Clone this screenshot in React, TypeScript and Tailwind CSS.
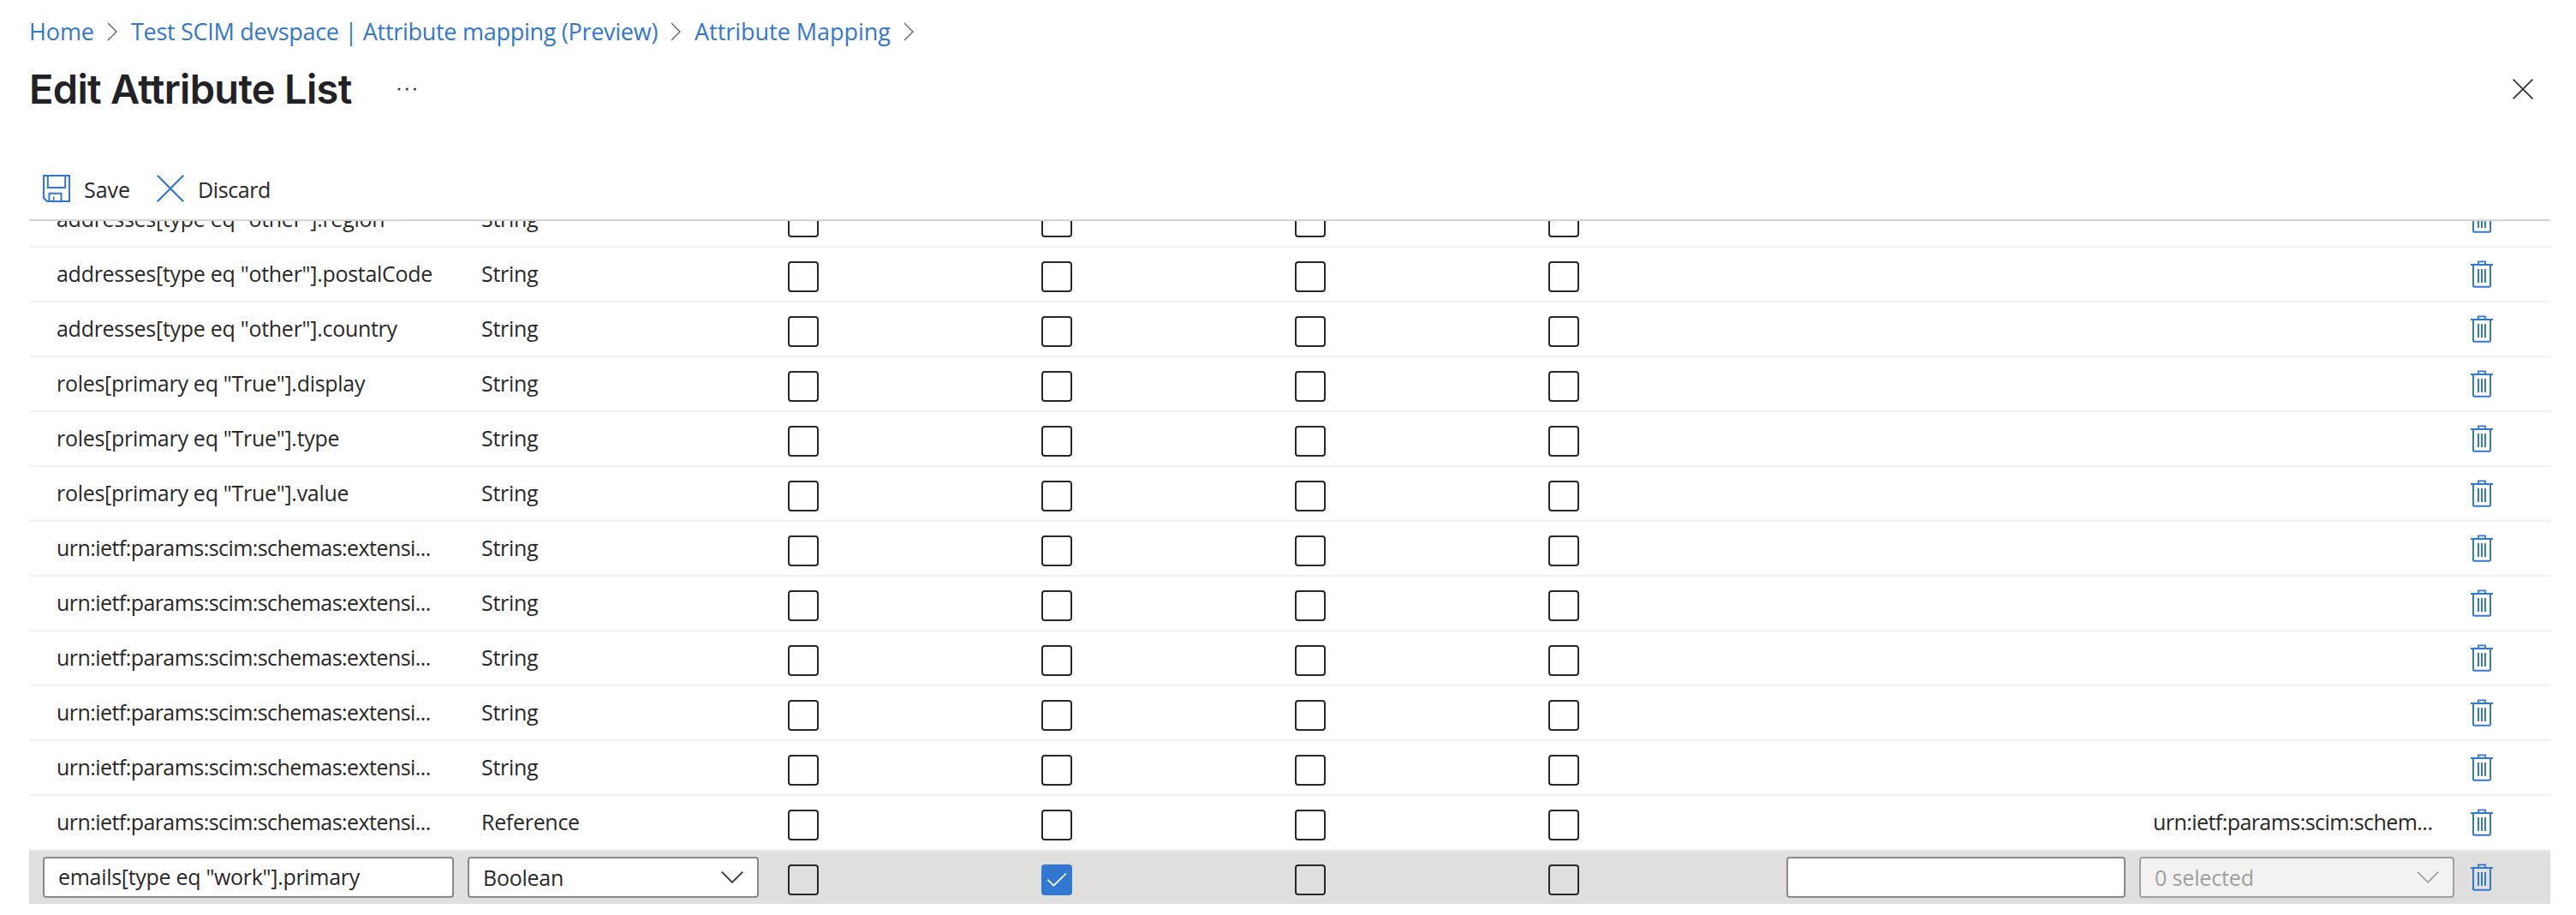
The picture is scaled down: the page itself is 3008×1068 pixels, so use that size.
import React, { useState } from 'react';
import clsx from 'clsx';

interface Attribute {
  id: number;
  name: string;
  type: string;
  reference?: string;
}

const FLAG_COUNT = 4;

const attributes: Attribute[] = [
  { id: 1, name: 'addresses[type eq "other"].region', type: 'String' },
  { id: 2, name: 'addresses[type eq "other"].postalCode', type: 'String' },
  { id: 3, name: 'addresses[type eq "other"].country', type: 'String' },
  { id: 4, name: 'roles[primary eq "True"].display', type: 'String' },
  { id: 5, name: 'roles[primary eq "True"].type', type: 'String' },
  { id: 6, name: 'roles[primary eq "True"].value', type: 'String' },
  { id: 7, name: 'urn:ietf:params:scim:schemas:extensi...', type: 'String' },
  { id: 8, name: 'urn:ietf:params:scim:schemas:extensi...', type: 'String' },
  { id: 9, name: 'urn:ietf:params:scim:schemas:extensi...', type: 'String' },
  { id: 10, name: 'urn:ietf:params:scim:schemas:extensi...', type: 'String' },
  { id: 11, name: 'urn:ietf:params:scim:schemas:extensi...', type: 'String' },
  {
    id: 12,
    name: 'urn:ietf:params:scim:schemas:extensi...',
    type: 'Reference',
    reference: 'urn:ietf:params:scim:schem...'
  }
];

const breadcrumbs = [
  { label: 'Home', className: 'tracking-[-0.1px]' },
  { label: 'Test SCIM devspace | Attribute mapping (Preview)', className: 'tracking-[-0.28px]' },
  { label: 'Attribute Mapping', className: 'tracking-[-0.03px]' }
];

const rowGrid = 'grid grid-cols-[512px_356px_296px_296px_296px_296px_412px_384px_96px]';

const BreadcrumbChevron: React.FC = () => (
  <svg width="12" height="22" viewBox="0 0 12 22" fill="none" stroke="#605e5c" strokeWidth="1.3">
    <path d="M1 1l10 10L1 21" />
  </svg>
);

const SaveIcon: React.FC = () => (
  <svg width="32" height="32" viewBox="0 0 32 32" fill="none" stroke="#3277d2" strokeWidth="2">
    <path d="M1 1h30v30H5l-4-4z" />
    <path d="M5.8 1v14h20.4V1" />
    <path d="M7.5 31v-9.3h14V31" />
    <path d="M12.8 25.5V31" strokeWidth="1.5" />
  </svg>
);

const DiscardIcon: React.FC = () => (
  <svg width="32" height="32" viewBox="0 0 32 32" fill="none" stroke="#3277d2" strokeWidth="2.2">
    <path d="M.8 .8l30.4 30.4M31.2 .8L.8 31.2" />
  </svg>
);

const CloseIcon: React.FC = () => (
  <svg width="24" height="24" viewBox="0 0 24 24" fill="none" stroke="#323130" strokeWidth="1.6">
    <path d="M.6 .6l22.8 22.8M23.4 .6L.6 23.4" />
  </svg>
);

const TrashIcon: React.FC = () => (
  <svg width="26" height="32" viewBox="0 0 26 32" fill="none" stroke="#3277d2" strokeWidth="2">
    <path d="M0 5h26" />
    <path d="M9 5V1.3h8V5" strokeWidth="1.8" />
    <path d="M3 5v24.6q0 1.2 1.2 1.2h17.6q1.2 0 1.2-1.2V5" />
    <path d="M9 10v16M13 10v16M17 10v16" />
  </svg>
);

const DropdownChevron: React.FC<{ color: string }> = ({ color }) => (
  <svg width="26" height="14" viewBox="0 0 26 14" fill="none" stroke={color} strokeWidth="1.8">
    <path d="M.8 .7L13 12.8 25.2 .7" />
  </svg>
);

const Checkbox: React.FC<{ defaultChecked?: boolean }> = ({ defaultChecked = false }) => {
  const [checked, setChecked] = useState(defaultChecked);

  return (
    <div className="pl-[18px] pt-4">
      <button
        role="checkbox"
        aria-checked={checked}
        onClick={() => setChecked(!checked)}
        className={clsx(
          'block h-9 w-9 rounded-[4px] border-2',
          checked ? 'border-[#3277d2] bg-[#3277d2]' : 'border-[#292827]'
        )}
      >
        {checked && (
          <svg width="32" height="32" viewBox="2 2 32 32" fill="none" stroke="#fff" strokeWidth="1.8">
            <path d="M7.3 17.7l7 7L28.8 10.6" />
          </svg>
        )}
      </button>
    </div>
  );
};

const DeleteButton: React.FC = () => (
  <button className="block h-8 pl-[3px] mt-[15px]" aria-label="Delete attribute">
    <TrashIcon />
  </button>
);

const AttributeRow: React.FC<{ attribute: Attribute }> = ({ attribute }) => {
  const isUrn = attribute.name.startsWith('urn:');

  return (
    <div className={clsx(rowGrid, 'h-16 border-b-2 border-[#f3f2f1]')}>
      <div
        className={clsx(
          'flex items-center pl-8 pb-[2px] whitespace-nowrap',
          isUrn ? 'tracking-[-0.56px]' : 'tracking-[-0.28px]'
        )}
      >
        {attribute.name}
      </div>
      <div className="flex items-center pl-4 pb-[2px] tracking-[-0.3px]">{attribute.type}</div>
      {Array.from({ length: FLAG_COUNT }, (_, i) => (
        <Checkbox key={i} />
      ))}
      <div />
      <div className="flex items-center pl-4 pb-[2px] whitespace-nowrap tracking-[-0.56px]">
        {attribute.reference}
      </div>
      <DeleteButton />
    </div>
  );
};

const NewAttributeRow: React.FC = () => {
  const [name, setName] = useState('emails[type eq "work"].primary');
  const [expression, setExpression] = useState('');

  return (
    <div className={clsx(rowGrid, 'h-[62px] bg-[#e0dfdd]')}>
      <div className="pl-4 pt-[7px]">
        <input
          value={name}
          onChange={(e) => setName(e.target.value)}
          className="block h-12 w-[480px] rounded-[4px] border-2 border-[#8a8987] bg-white pl-4 pb-[2px] tracking-[-0.3px] outline-none"
        />
      </div>
      <div className="pt-[7px]">
        <button className="flex h-12 w-[340px] items-center justify-between rounded-[4px] border-2 border-[#8a8987] bg-white px-4">
          <span className="tracking-[-0.25px]">Boolean</span>
          <DropdownChevron color="#323130" />
        </button>
      </div>
      {Array.from({ length: FLAG_COUNT }, (_, i) => (
        <Checkbox key={i} defaultChecked={i === 1} />
      ))}
      <div className="pt-[7px]">
        <input
          value={expression}
          onChange={(e) => setExpression(e.target.value)}
          className="block h-12 w-[396px] rounded-[4px] border-2 border-[#8a8987] bg-white px-4 outline-none"
        />
      </div>
      <div className="pt-[7px]">
        <button
          disabled
          className="flex h-12 w-[368px] items-center justify-between rounded-[4px] border-2 border-[#a19f9d] bg-[#f3f2f0] px-4 text-[#a19f9d]"
        >
          <span className="tracking-[-0.15px]">0 selected</span>
          <DropdownChevron color="#a19f9d" />
        </button>
      </div>
      <DeleteButton />
    </div>
  );
};

const App: React.FC = () => {
  return (
    <div className="h-[1068px] w-[3008px] overflow-hidden bg-white pl-[34px] pr-[30px] font-['Open_Sans',sans-serif] text-[25px] leading-[34px] text-[#292827]">
      {/* Breadcrumb */}
      <nav className="flex h-[73px] items-center text-[27px] text-[#3277d2]">
        {breadcrumbs.map((crumb) => (
          <div key={crumb.label} className="flex items-center">
            <a href="#" className={clsx('whitespace-nowrap', crumb.className)}>
              {crumb.label}
            </a>
            <div className="ml-[15px] mr-4 pt-px">
              <BreadcrumbChevron />
            </div>
          </div>
        ))}
      </nav>

      {/* Title */}
      <header className="flex h-[62px] items-center">
        <h1 className="w-[430px] whitespace-nowrap font-['Inter',sans-serif] text-[47px] font-semibold leading-[60px] tracking-[-0.7px] text-[#212126]">
          Edit Attribute List
        </h1>
        <button aria-label="More actions">
          <svg width="24" height="4" viewBox="0 0 24 4" fill="#323130">
            <circle cx="2" cy="2" r="1.5" />
            <circle cx="11.2" cy="2" r="1.5" />
            <circle cx="20.4" cy="2" r="1.5" />
          </svg>
        </button>
        <button className="ml-auto mr-5" aria-label="Close">
          <CloseIcon />
        </button>
      </header>

      {/* Toolbar */}
      <div className="mt-[49px] flex h-[74px] items-center border-b-2 border-[#d4d4d4] pl-4 pb-px">
        <button className="flex items-center gap-4">
          <SaveIcon />
          <span className="w-[85px] pt-[3px] text-left">Save</span>
        </button>
        <button className="flex items-center gap-4">
          <DiscardIcon />
          <span className="pt-[3px] tracking-[-0.4px]">Discard</span>
        </button>
      </div>

      {/* Scrolled attribute table */}
      <div className="h-[797px] overflow-hidden">
        <div className="-mt-[33px]">
          {attributes.map((attribute) => (
            <AttributeRow key={attribute.id} attribute={attribute} />
          ))}
          <NewAttributeRow />
        </div>
      </div>
    </div>
  );
};

export default App;
